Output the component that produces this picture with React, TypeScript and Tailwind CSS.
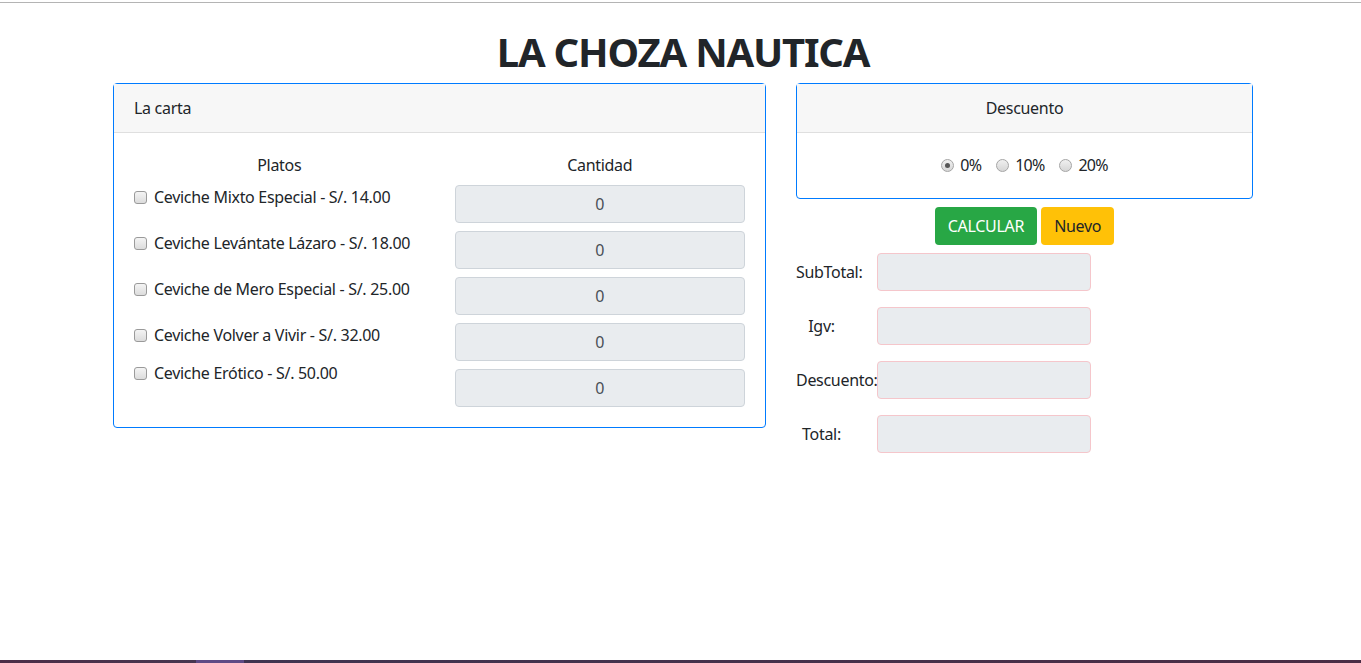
import React, { useState } from 'react';

const platos = [
  { nombre: 'Ceviche Mixto Especial', precio: '14.00', gap: 'mb-[22px]' },
  { nombre: 'Ceviche Levántate Lázaro', precio: '18.00', gap: 'mb-[22px]' },
  { nombre: 'Ceviche de Mero Especial', precio: '25.00', gap: 'mb-[22px]' },
  { nombre: 'Ceviche Volver a Vivir', precio: '32.00', gap: 'mb-[14px]' },
  { nombre: 'Ceviche Erótico', precio: '50.00', gap: '' },
];

const totales = ['SubTotal:', 'Igv:', 'Descuento:', 'Total:'];

const CheckBox = () => (
  <span className="mt-[6px] mr-[7px] inline-block h-[13px] w-[13px] shrink-0 rounded-[3px] border border-[#9a9a9a] bg-gradient-to-b from-[#f4f4f4] to-[#dcdcdc]" />
);

const Radio: React.FC<{ checked?: boolean }> = ({ checked }) => (
  <span className="mr-[6px] flex h-[13px] w-[13px] items-center justify-center rounded-full border border-[#a5a5a5] bg-gradient-to-b from-[#f0f0f0] to-[#d6d6d6]">
    {checked && <span className="h-[5px] w-[5px] rounded-full bg-[#555]" />}
  </span>
);

const App: React.FC = () => {
  const [descuento] = useState('0');

  return (
    <div
      className="flex h-[663px] flex-col bg-white text-[16px] tracking-[-0.3px] text-[#212529]"
      style={{ fontFamily: '"Noto Sans", sans-serif' }}
    >
      <div className="h-[2px]" />
      <div className="h-px bg-[#b4b4b4]" />

      <div className="ml-[113px] w-[1140px]">
        <h1 className="mt-[25px] mb-[7px] text-center text-[40px] leading-[48px] font-bold tracking-[-1.2px]">LA CHOZA NAUTICA</h1>

        <div className="flex items-start gap-[30px]">
          {/* La carta */}
          <div className="w-[653px] rounded-[4px] border border-[#007bff]">
            <div className="border-b border-[#dfdfdf] bg-[#f7f7f7] px-5 py-3 leading-6">La carta</div>
            <div className="grid grid-cols-2 gap-[30px] p-5">
              <div>
                <div className="mb-[8px] text-center leading-6">Platos</div>
                {platos.map((p) => (
                  <div key={p.nombre} className={`flex leading-6 ${p.gap}`}>
                    <CheckBox />
                    <span>
                      {p.nombre} - S/. {p.precio}
                    </span>
                  </div>
                ))}
              </div>
              <div>
                <div className="mb-[8px] text-center leading-6">Cantidad</div>
                <div className="flex flex-col gap-[8px]">
                  {platos.map((p) => (
                    <div
                      key={p.nombre}
                      className="h-[38px] rounded-[4px] border border-[#ced4da] bg-[#e9ecef] text-center leading-[36px] text-[#495057]"
                    >
                      0
                    </div>
                  ))}
                </div>
              </div>
            </div>
          </div>

          {/* Descuento */}
          <div className="w-[457px]">
            <div className="rounded-[4px] border border-[#007bff]">
              <div className="border-b border-[#dfdfdf] bg-[#f7f7f7] px-5 py-3 text-center leading-6">Descuento</div>
              <div className="flex h-[65px] items-center justify-center gap-[15px] px-5 pb-px leading-6 tracking-[-0.8px]">
                {['0', '10', '20'].map((d) => (
                  <label key={d} className="flex items-center">
                    <Radio checked={descuento === d} />
                    {d}%
                  </label>
                ))}
              </div>
            </div>

            <div className="mt-[8px] flex justify-center gap-[4px]">
              <button className="h-[38px] rounded-[4px] bg-[#28a745] px-[13px] text-white">CALCULAR</button>
              <button className="h-[38px] rounded-[4px] bg-[#ffc107] px-[13px] text-[#212529]">Nuevo</button>
            </div>

            <div className="mt-[8px] flex flex-col gap-[16px]">
              {totales.map((t) => (
                <div key={t} className="flex items-center">
                  <div className="w-[81px]">
                    <div className="w-[51px] text-center whitespace-nowrap">{t}</div>
                  </div>
                  <div className="h-[38px] w-[214px] rounded-[4px] border border-[#f5c6cb] bg-[#e9ecef]" />
                </div>
              ))}
            </div>
          </div>
        </div>
      </div>

      <div className="mt-auto flex h-[3px]">
        <div className="w-[196px] bg-gradient-to-r from-[#4b2d47] to-[#463650]" />
        <div className="w-[48px] bg-[#5e4a85]" />
        <div className="flex-1 bg-gradient-to-r from-[#3f3450] to-[#4a2d45]" />
      </div>
    </div>
  );
};

export default App;
